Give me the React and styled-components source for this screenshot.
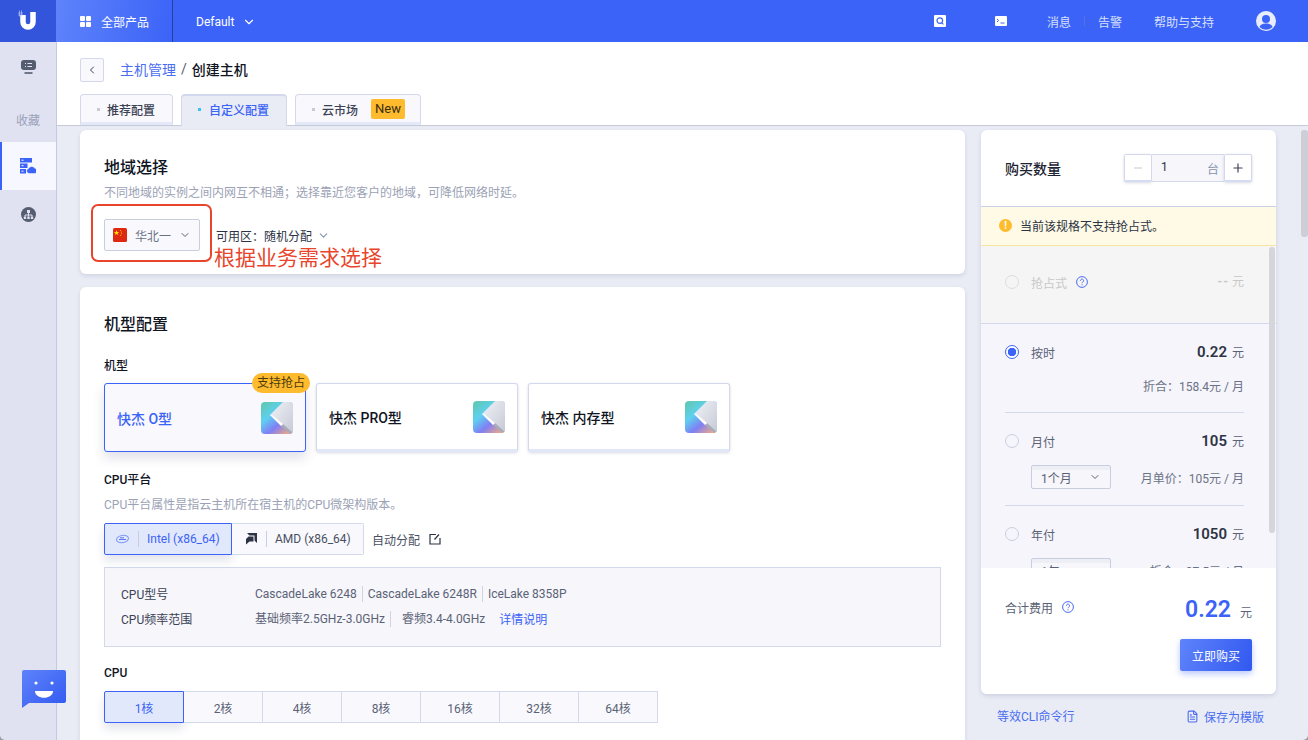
import React from 'react';
import styled, { createGlobalStyle } from 'styled-components';
import { ChevronDown, ChevronLeft, Minus, Plus, FileText } from 'lucide-react';

const GlobalStyle = createGlobalStyle`
	html, body {
		margin: 0;
		height: 100%;
		overflow: hidden;
		background: #9a9a9a;
		font-family: Roboto, "Noto Sans CJK SC", sans-serif;
		font-size: 12px;
		color: #1c2233;
	}
	* {
		box-sizing: border-box;
	}
`;

const Page = styled.div`
	height: 100vh;
	display: flex;
	flex-direction: column;
	position: relative;
	overflow: hidden;
	border-radius: 0 0 5px 5px;
`;

const TopBar = styled.header`
	height: 42px;
	flex: none;
	display: flex;
	align-items: center;
	background: #3b63f7;
	color: #fff;
`;
const LogoCell = styled.div`
	width: 56px;
	height: 100%;
	display: flex;
	align-items: center;
	justify-content: center;
	background: #3355dc;
`;
const AllProducts = styled.div`
	width: 117px;
	height: 100%;
	display: flex;
	align-items: center;
	gap: 10px;
	padding-left: 24px;
	font-size: 12px;
	background: linear-gradient(100deg, #5f83fb 0%, #3b63f7 100%);
	border-right: 1px solid #26409f;
`;
const GridDots = styled.span`
	width: 11px;
	height: 11px;
	display: grid;
	grid-template-columns: 1fr 1fr;
	gap: 1px;
	i {
		background: #fff;
		border-radius: 1px;
	}
`;
const ProjectPicker = styled.div`
	display: flex;
	align-items: center;
	gap: 8px;
	margin-left: 23px;
	padding-top: 1px;
	font-size: 12px;
`;
const TopRight = styled.div`
	margin-left: auto;
	display: flex;
	align-items: center;
	padding-right: 32px;
	color: #d9e1fd;
	font-size: 12px;
`;
const TopIcon = styled.span`
	display: flex;
	width: 12px;
	height: 12px;
	margin-right: ${(p) => p.$gap}px;
`;
const TopDivider = styled.span`
	width: 1px;
	height: 10px;
	background: #5573e0;
	margin: 0 13px;
`;
const TopLink = styled.span`
	margin-right: ${(p) => p.$gap || 0}px;
`;

const Body = styled.div`
	flex: 1;
	min-height: 0;
	display: flex;
`;
const Sidebar = styled.nav`
	width: 57px;
	flex: none;
	display: flex;
	flex-direction: column;
	background: #e0e2f2;
	border-right: 1px solid #c3c9de;
`;
const SideItem = styled.div`
	height: ${(p) => p.$height}px;
	display: flex;
	align-items: center;
	justify-content: center;
	color: #9aa1b8;
	font-size: 12px;
	background: ${(p) => (p.$active ? '#f7f8ff' : 'transparent')};
	border-left: 2px solid ${(p) => (p.$active ? '#3b63f7' : 'transparent')};
	padding: ${(p) => p.$down || 0}px 2px 0 0;
`;

const Main = styled.main`
	flex: 1;
	min-width: 0;
	display: flex;
	flex-direction: column;
`;
const PageHead = styled.div`
	height: 84px;
	flex: none;
	background: #fff;
	border-bottom: 1px solid #c6cad8;
	padding: 16px 0 0 23px;
	display: flex;
	flex-direction: column;
`;
const Crumbs = styled.div`
	display: flex;
	align-items: center;
	height: 24px;
	font-size: 14px;
`;
const BackButton = styled.button`
	width: 24px;
	height: 24px;
	padding: 0;
	display: flex;
	align-items: center;
	justify-content: center;
	margin-right: 16px;
	background: #f9f9fd;
	border: 1px solid #d4d8ec;
	border-radius: 2px;
	color: #3c4256;
`;
const CrumbLink = styled.span`
	color: #4a6cf0;
	padding-bottom: 2px;
`;
const CrumbSep = styled.span`
	margin: 0 5px;
	padding-bottom: 2px;
	color: #555c70;
`;
const CrumbNow = styled.span`
	font-weight: 500;
	padding-bottom: 2px;
	color: #11151f;
`;
const Tabs = styled.div`
	display: flex;
	gap: 8px;
	margin-top: 12px;
	height: 31px;
`;
const Tab = styled.div`
	height: ${(p) => (p.$active ? 32 : 31)}px;
	width: ${(p) => p.$width}px;
	display: flex;
	align-items: center;
	padding: ${(p) => (p.$active ? '0 0 3px 16px' : '1px 0 0 16px')};
	font-weight: 500;
	font-size: 12px;
	color: ${(p) => (p.$active ? '#3b63f7' : '#3c4256')};
	background: ${(p) => (p.$active ? '#e9ecf5' : '#f9f9fd')};
	border: 1px solid #d4d8ec;
	border-top-width: ${(p) => (p.$active ? 2 : 1)}px;
	border-bottom: ${(p) => (p.$active ? 'none' : '3px solid #e4e9fa')};
	border-radius: 4px 4px 0 0;
`;
const TabDot = styled.i`
	width: 3px;
	height: 3px;
	margin-right: ${(p) => (p.$active ? 8 : 7)}px;
	background: ${(p) => (p.$active ? '#35c5ee' : '#c8cad4')};
`;
const NewTag = styled.span`
	margin-left: 13px;
	padding: 0 4px;
	height: 20px;
	line-height: 20px;
	background: #fdbb2d;
	border-radius: 2px;
	color: #3a2e10;
	font-weight: 400;
	font-size: 13px;
`;

const Content = styled.div`
	flex: 1;
	min-height: 0;
	overflow: hidden;
	display: flex;
	align-items: flex-start;
	gap: 16px;
	padding: 4px 0 0 23px;
	background: #e9ecf5;
`;
const LeftCol = styled.div`
	width: 885px;
	flex: none;
	display: flex;
	flex-direction: column;
	gap: 13px;
`;
const Card = styled.section`
	background: #fff;
	border-radius: 6px;
	box-shadow: 0 2px 4px rgba(60, 70, 110, 0.14);
	padding: 0 24px;
	height: ${(p) => p.$height}px;
	flex: none;
`;
const CardTitle = styled.h2`
	margin: 0;
	font-size: 16px;
	line-height: 24px;
	font-weight: 500;
	color: #11151f;
	padding-top: ${(p) => p.$top}px;
`;
const Hint = styled.p`
	margin: ${(p) => p.$top || 0}px 0 0;
	font-size: 12px;
	line-height: 18px;
	color: #9ba2b5;
`;
const RegionRow = styled.div`
	display: flex;
	align-items: center;
	margin-top: 17px;
`;
const RegionSelect = styled.div`
	width: 96px;
	height: 32px;
	display: flex;
	align-items: center;
	padding: 0 9px 0 8px;
	gap: 8px;
	background: #f9f9fd;
	border: 1px solid #c7cede;
	border-radius: 2px;
	color: #6b7286;
	white-space: nowrap;
	svg {
		flex: none;
	}
`;
const ChevronSlot = styled.span`
	display: flex;
	margin-left: auto;
	color: #5b6276;
`;
const ZonePicker = styled.div`
	display: flex;
	align-items: center;
	margin-left: 16px;
	color: #2d3344;
	gap: 5px;
`;
const ZoneChevron = styled.span`
	display: flex;
	color: #8a93ad;
`;
const Annotation = styled.div`
	position: absolute;
	left: 91px;
	top: 204px;
	width: 121px;
	height: 58px;
	border: 2px solid #e8452c;
	border-radius: 7px;
`;
const AnnotationText = styled.div`
	position: absolute;
	left: 214px;
	top: 243px;
	font-size: 21px;
	line-height: 30px;
	color: #e8452c;
`;

const FieldLabel = styled.div`
	font-weight: 500;
	font-size: 12px;
	line-height: 18px;
	color: #11151f;
	margin-top: ${(p) => p.$top}px;
`;
const TypeRow = styled.div`
	display: flex;
	gap: 10px;
	margin-top: 8px;
`;
const TypeCard = styled.div`
	position: relative;
	width: 202px;
	height: 69px;
	display: flex;
	align-items: center;
	justify-content: space-between;
	padding: 0 12px;
	font-size: 14px;
	font-weight: 500;
	border-radius: 3px;
	color: ${(p) => (p.$active ? '#3b63f7' : '#11151f')};
	background: ${(p) => (p.$active ? '#f8f8fd' : '#fff')};
	border: 1px solid ${(p) => (p.$active ? '#3b63f7' : '#d4d8ec')};
	border-bottom: ${(p) => (p.$active ? '1px solid #3b63f7' : '3px solid #e1e6f8')};
	box-shadow: ${(p) => (p.$active ? '0 6px 12px rgba(60, 70, 110, 0.16)' : '0 1px 3px rgba(60, 70, 110, 0.2)')};
`;
const SpotBadge = styled.span`
	position: absolute;
	top: -11px;
	right: -5px;
	height: 20px;
	padding: 0 5px;
	line-height: 20px;
	background: #fdbb2d;
	border-radius: 10px;
	font-size: 12px;
	font-weight: 400;
	color: #4c3a0d;
`;
const PlatformRow = styled.div`
	display: flex;
	align-items: center;
	margin-top: 9px;
`;
const PlatformButton = styled.div`
	width: ${(p) => p.$width}px;
	height: 32px;
	display: flex;
	align-items: center;
	padding-left: ${(p) => (p.$active ? 11 : 13)}px;
	color: ${(p) => (p.$active ? '#3b63f7' : '#4a5063')};
	background: ${(p) => (p.$active ? '#e2e8fc' : '#f9f9fd')};
	border: 1px solid ${(p) => (p.$active ? '#3b63f7' : '#d4d8ec')};
	border-left-width: ${(p) => (p.$active ? 1 : 0)}px;
	border-radius: ${(p) => (p.$active ? '2px 0 0 2px' : '0 2px 2px 0')};
	box-shadow: ${(p) => (p.$active ? '0 6px 10px rgba(60, 70, 110, 0.14)' : 'none')};
`;
const PlatformSep = styled.i`
	width: 1px;
	height: 16px;
	margin: 0 8px 0 9px;
	background: #c9cede;
`;
const AutoAssign = styled.div`
	display: flex;
	align-items: center;
	gap: 9px;
	margin-left: 8px;
	color: #4a5063;
`;
const InfoBox = styled.div`
	margin-top: 12px;
	height: 80px;
	padding: 13px 16px;
	display: grid;
	grid-template-columns: 134px 1fr;
	grid-auto-rows: 25px;
	align-items: center;
	background: #f6f6fb;
	border: 1px solid #d4d8ec;
`;
const InfoLabel = styled.span`
	color: #3c4256;
`;
const InfoValues = styled.div`
	display: flex;
	align-items: center;
	color: #5b6276;
`;
const InfoValue = styled.span`
	padding-right: ${(p) => p.$after ?? 5}px;
	margin-right: ${(p) => p.$gap ?? 5}px;
	border-right: ${(p) => (p.$plain ? 'none' : '1px solid #d0d4e2')};
	line-height: 16px;
`;
const InfoLink = styled.a`
	color: #3b63f7;
`;
const CoreRow = styled.div`
	display: flex;
	margin-top: 9px;
`;
const CoreButton = styled.div`
	width: ${(p) => (p.$active ? 80 : 79)}px;
	height: 32px;
	display: flex;
	align-items: center;
	justify-content: center;
	color: ${(p) => (p.$active ? '#3b63f7' : '#5b6276')};
	background: ${(p) => (p.$active ? '#e2e8fc' : '#f9f9fd')};
	border: 1px solid ${(p) => (p.$active ? '#3b63f7' : '#d4d8ec')};
	border-left-width: ${(p) => (p.$active ? 1 : 0)}px;
	border-radius: ${(p) => (p.$active ? '2px 0 0 2px' : '0')};
	box-shadow: ${(p) => (p.$active ? '0 6px 10px rgba(60, 70, 110, 0.14)' : 'none')};
`;

const RightCol = styled.aside`
	width: 295px;
	flex: none;
	display: flex;
	flex-direction: column;
`;
const BuyPanel = styled.div`
	height: 564px;
	display: flex;
	flex-direction: column;
	background: #fff;
	border-radius: 6px;
	box-shadow: 0 2px 4px rgba(60, 70, 110, 0.16);
	overflow: hidden;
`;
const QtyHead = styled.div`
	height: 76px;
	flex: none;
	display: flex;
	align-items: center;
	justify-content: space-between;
	padding: 0 24px;
	font-size: 14px;
	font-weight: 500;
	color: #1c2233;
`;
const Stepper = styled.div`
	display: flex;
	height: 28px;
`;
const StepButton = styled.button`
	width: 28px;
	height: 28px;
	padding: 0;
	display: flex;
	align-items: center;
	justify-content: center;
	background: #fff;
	color: ${(p) => (p.$disabled ? '#c5c9d4' : '#3c4256')};
	border: 1px solid #d4d8ec;
	border-bottom: 2px solid #d4dbf3;
	border-radius: 2px;
	box-shadow: 0 1px 3px rgba(60, 70, 110, 0.2);
`;
const QtyInput = styled.div`
	width: 72px;
	display: flex;
	align-items: center;
	justify-content: space-between;
	padding: 0 5px 0 9px;
	background: #f6f6fb;
	border-top: 1px solid #d4d8ec;
	border-bottom: 1px solid #d4d8ec;
	font-size: 12px;
	font-weight: 400;
	color: #2d3344;
`;
const QtyNumber = styled.span`
	margin-top: -2px;
`;
const QtyUnit = styled.span`
	color: #8a93ad;
	margin-top: 1px;
`;
const Notice = styled.div`
	height: 40px;
	flex: none;
	display: flex;
	align-items: center;
	gap: 8px;
	padding: 0 18px 2px;
	font-size: 12px;
	color: #2d3344;
	background: #fefae6;
	border-top: 1px solid #c9d1e5;
	border-bottom: 1px solid #f9e4a0;
`;
const NoticeIcon = styled.span`
	width: 13px;
	height: 13px;
	border-radius: 50%;
	background: #fdbb2d;
	color: #fff;
	font-size: 10px;
	font-weight: 700;
	line-height: 13px;
	text-align: center;
`;
const PlanScroll = styled.div`
	position: relative;
	height: 322px;
	flex: none;
	overflow: hidden;
	background: #f5f5fb;
`;
const ScrollThumb = styled.div`
	position: absolute;
	top: ${(p) => p.$top}px;
	right: ${(p) => p.$right}px;
	width: ${(p) => p.$width}px;
	height: ${(p) => p.$height}px;
	background: #d5d6dc;
	border-radius: 3px;
`;
const SpotPlan = styled.div`
	height: 78px;
	padding: 26px 32px 0 24px;
	display: flex;
	align-items: flex-start;
	justify-content: space-between;
	background: #f5f5f5;
	border-bottom: 1px solid #d4d8ec;
	color: #c8c8c8;
`;
const SpotName = styled.span`
	color: #c8c8c8;
`;
const Plan = styled.div`
	margin: 0 32px 0 24px;
	padding: 18px 0 ${(p) => (p.$compact ? 15 : 16)}px;
	border-bottom: ${(p) => (p.$last ? 'none' : '1px solid #d4d8ec')};
`;
const PlanRow = styled.div`
	display: flex;
	align-items: center;
	height: 20px;
	color: #5b6276;
`;
const Radio = styled.span`
	width: 14px;
	height: 14px;
	margin-right: 12px;
	border-radius: 50%;
	flex: none;
	background: ${(p) => (p.$checked ? 'radial-gradient(circle, #3b63f7 0 4px, #fff 4.5px)' : 'transparent')};
	border: 1px solid ${(p) => (p.$checked ? '#3b63f7' : p.$disabled ? '#dedede' : '#c9cede')};
`;
const Help = styled.span`
	display: flex;
	margin-left: ${(p) => p.$left}px;
`;
const Price = styled.span`
	margin-left: auto;
	font-size: 12px;
	color: ${(p) => (p.$muted ? '#c8c8c8' : '#5b6276')};
	b {
		font-size: 15px;
		font-weight: 600;
		color: #2d3344;
		margin-right: 5px;
	}
`;
const MutedPrice = styled.span`
	font-size: 14px;
	font-weight: 500;
	font-variant-ligatures: none;
	letter-spacing: 1px;
	margin-right: 3px;
`;
const PlanSub = styled.div`
	display: flex;
	align-items: center;
	justify-content: space-between;
	height: 24px;
	margin-top: ${(p) => (p.$compact ? 11 : 14)}px;
	padding-left: 26px;
	color: #6b7286;
	font-size: 12px;
`;
const PlanSelect = styled.div`
	width: 80px;
	height: 24px;
	display: flex;
	align-items: center;
	padding: 0 9px;
	background: linear-gradient(#eeeff6 0 4px, #f6f6fb 4px);
	border: 1px solid #c7cede;
	border-radius: 2px;
	color: #5b6276;
`;
const SubText = styled.span`
	margin-left: auto;
`;
const TotalBox = styled.div`
	flex: 1;
	background: #fff;
	padding: 27px 24px 0;
	display: flex;
	flex-direction: column;
`;
const TotalRow = styled.div`
	display: flex;
	align-items: center;
	height: 24px;
	color: #5b6276;
	font-size: 12px;
`;
const TotalPrice = styled.span`
	margin-left: auto;
	margin-top: 4px;
	b {
		font-size: 23px;
		font-weight: 600;
		color: #3b63f7;
		margin-right: 9px;
	}
	em {
		font-style: normal;
		color: #5b6276;
	}
`;
const BuyButton = styled.button`
	align-self: flex-end;
	width: 72px;
	height: 32px;
	margin-top: 20px;
	border: none;
	border-radius: 2px;
	font: inherit;
	font-size: 12px;
	color: #fff;
	background: linear-gradient(110deg, #5f83fb, #3159f0);
	box-shadow: 0 3px 6px rgba(59, 99, 247, 0.35);
`;
const PanelLinks = styled.div`
	display: flex;
	align-items: center;
	justify-content: space-between;
	margin-top: 11px;
	padding: 0 12px 0 16px;
	color: #4a6cf0;
	font-size: 12px;
`;
const SaveLink = styled.span`
	display: flex;
	align-items: center;
	gap: 5px;
	margin-top: 3px;
`;
const PageScroll = styled.div`
	position: absolute;
	top: 130px;
	right: 0;
	width: 7px;
	height: 107px;
	background: #cdced6;
	border-radius: 3px;
`;
const ChatBubble = styled.div`
	position: absolute;
	left: 22px;
	top: 670px;
	display: flex;
`;

const ULogo = () => (
	<svg width="22" height="22" viewBox="0 0 22 22">
		<path d="M6 5v7a5 5 0 0 0 10 0V2" fill="none" stroke="#fff" strokeWidth="5.5" />
		<path d="M1 3h5M1 5h5M2.500 .5v6M4.500 .5v6" stroke="#c4d0fb" strokeWidth="0.6" fill="none" />
	</svg>
);
const SearchIcon = () => (
	<svg width="12" height="12" viewBox="0 0 12 12">
		<rect width="12" height="12" rx="1" fill="#fff" />
		<circle cx="5.8" cy="5.6" r="2.8" fill="none" stroke="#3b63f7" strokeWidth="1.2" />
		<path d="M7.8 7.8l1.6 1.6" stroke="#3b63f7" strokeWidth="1.2" />
	</svg>
);
const TerminalIcon = () => (
	<svg width="12" height="12" viewBox="0 0 12 12">
		<rect y="1" width="12" height="10" rx="1" fill="#fff" />
		<path d="M2 4l1.6 1.5L2 7" fill="none" stroke="#3b63f7" strokeWidth="1" />
		<path d="M5.5 8h4" stroke="#3b63f7" strokeWidth="1" />
	</svg>
);
const AvatarIcon = () => (
	<svg width="20" height="20" viewBox="0 0 20 20">
		<circle cx="10" cy="10" r="10" fill="#e8ecfb" />
		<circle cx="10" cy="8" r="4" fill="#3b63f7" />
		<path d="M3.5 16c1-3 4-3.6 6.500-3.600s5.500.6 6.500 3.600a9 9 0 0 1-13 0z" fill="#3b63f7" />
	</svg>
);
const MonitorIcon = () => (
	<svg width="15" height="14" viewBox="0 0 15 14">
		<rect width="15" height="10" rx="3" fill="#555d70" />
		<path d="M3.500 13h8" stroke="#555d70" strokeWidth="1.600" />
		<path d="M4 3.500h1M4 6.500h1M6.500 3.500h4.500M6.500 6.500h4.500" stroke="#e0e2f2" strokeWidth="1.200" />
	</svg>
);
const ServerCloudIcon = () => (
	<svg width="16" height="16" viewBox="0 0 16 16">
		<path d="M0 0h12v4.400H0zM0 5.500h7.500v4.400H0zM0 11h6v4.400H0z" fill="#3b63f7" />
		<path d="M1.500 2.200h2M1.500 7.700h2M1.500 13.200h2" stroke="#fff" />
		<path d="M9 15.500a2.500 2.500 0 0 1-.5-4.900 3.400 3.400 0 0 1 6.100-.5 2.800 2.800 0 0 1 .5 5.400z" fill="#3b63f7" stroke="#f7f8ff" strokeWidth=".5" />
	</svg>
);
const NetworkIcon = () => (
	<svg width="15" height="15" viewBox="0 0 15 15">
		<circle cx="7.500" cy="7.500" r="7.500" fill="#555d70" />
		<path d="M6 3h3v3H6zM2.800 9.500h2.400V12H2.800zM6.300 9.500h2.400V12H6.300zM9.800 9.500h2.400V12H9.800z" fill="#e0e2f2" />
		<path d="M7.500 6v3.500M4 9.500V8h7v1.500" fill="none" stroke="#e0e2f2" />
	</svg>
);
const FlagIcon = () => (
	<svg width="14" height="14" viewBox="0 0 14 14">
		<rect width="14" height="14" rx="1.500" fill="#de2910" />
		<path d="M3.500 2l.7 1.900 2 .1-1.600 1.200.6 1.900-1.700-1.100-1.700 1.100.6-1.900L.8 4l2-.1z" fill="#ffde00" />
		<circle cx="7.500" cy="2.500" r=".5" fill="#ffde00" />
		<circle cx="8.500" cy="4" r=".5" fill="#ffde00" />
		<circle cx="8.500" cy="5.800" r=".5" fill="#ffde00" />
		<circle cx="7.500" cy="7.200" r=".5" fill="#ffde00" />
	</svg>
);
const KLogo = ({ id }) => (
	<svg width="32" height="32" viewBox="0 0 32 32">
		<defs>
			<linearGradient id={`${id}-a`} x1="0" y1="0" x2="0.8" y2="1">
				<stop offset="0" stopColor="#5fc7a8" />
				<stop offset="0.4" stopColor="#5fd0f0" />
				<stop offset="0.7" stopColor="#7f7ff5" />
				<stop offset="1" stopColor="#e8a58c" />
			</linearGradient>
			<linearGradient id={`${id}-b`} x1="0" y1="0" x2="1" y2="1">
				<stop offset="0" stopColor="#f1f2f6" />
				<stop offset="1" stopColor="#c5c8d6" />
			</linearGradient>
			<clipPath id={`${id}-c`}>
				<rect width="32" height="32" rx="4" />
			</clipPath>
		</defs>
		<g clipPath={`url(#${id}-c)`}>
			<rect width="32" height="32" fill={`url(#${id}-a)`} />
			<path d="M32 0H22L10 12l12 12 10 8z" fill={`url(#${id}-b)`} />
			<path d="M20 24l2-2 10 9v1h-3z" fill="#a8abb8" />
			<path d="M10 12l12 10-2 2L9 13z" fill="#fff" />
		</g>
	</svg>
);
const IntelIcon = () => (
	<svg width="13" height="12" viewBox="0 0 13 12">
		<ellipse cx="6.500" cy="6" rx="6" ry="3.600" fill="none" stroke="#7f9bf5" strokeWidth="1" transform="rotate(-10 6.500 6)" />
		<path d="M3 6.500h7M4 4.800h4" stroke="#5a78ef" strokeWidth="1" />
	</svg>
);
const AmdIcon = () => (
	<svg width="12" height="12" viewBox="0 0 12 12">
		<path d="M2 0H12v10L9.500 7.500V2.500H4.500z" fill="#2d3344" />
		<path d="M1 11.500V6l2.500-2.500H8.500V8.500H4.500L1 11.500z" fill="#2d3344" />
	</svg>
);
const OpenIcon = () => (
	<svg width="12" height="12" viewBox="0 0 12 12" fill="none" stroke="#2d3344" strokeWidth="1.200">
		<path d="M7 1.500H1v9.500h10V5" />
		<path d="M5.500 6.500L10 1.500" />
	</svg>
);
const HelpIcon = () => (
	<svg width="12" height="12" viewBox="0 0 12 12" fill="none" stroke="#4a6cf0">
		<circle cx="6" cy="6" r="5.400" />
		<path d="M4.400 4.700a1.600 1.600 0 1 1 2.400 1.400c-.5.300-.8.600-.8 1.100" />
		<path d="M6 8.300v1" />
	</svg>
);
const ChatIcon = () => (
	<svg width="44" height="38" viewBox="0 0 44 38">
		<defs>
			<linearGradient id="chatFill" x1="0" y1="0" x2="1" y2="1">
				<stop offset="0" stopColor="#5f83fb" />
				<stop offset="1" stopColor="#3159f0" />
			</linearGradient>
		</defs>
		<path d="M2 0h40a2 2 0 0 1 2 2v29a2 2 0 0 1-2 2H7l-7 5V2a2 2 0 0 1 2-2z" fill="url(#chatFill)" />
		<circle cx="14" cy="13" r="1.600" fill="#fff" />
		<circle cx="30" cy="13" r="1.600" fill="#fff" />
		<path d="M13 21h18c0 9-18 9-18 0z" fill="#fff" />
	</svg>
);

const coreOptions = ['1核', '2核', '4核', '8核', '16核', '32核', '64核'];
const typeOptions = [
	{ id: 'o', name: '快杰 O型', active: true },
	{ id: 'pro', name: '快杰 PRO型' },
	{ id: 'mem', name: '快杰 内存型' },
];

const App = () => {
	return (
		<Page>
			<GlobalStyle />
			<TopBar>
				<LogoCell>
					<ULogo />
				</LogoCell>
				<AllProducts>
					<GridDots>
						<i />
						<i />
						<i />
						<i />
					</GridDots>
					全部产品
				</AllProducts>
				<ProjectPicker>
					Default
					<ChevronDown size={14} />
				</ProjectPicker>
				<TopRight>
					<TopIcon $gap={49}>
						<SearchIcon />
					</TopIcon>
					<TopIcon $gap={40}>
						<TerminalIcon />
					</TopIcon>
					<TopLink>消息</TopLink>
					<TopDivider />
					<TopLink $gap={32}>告警</TopLink>
					<TopLink $gap={42}>帮助与支持</TopLink>
					<AvatarIcon />
				</TopRight>
			</TopBar>
			<Body>
				<Sidebar>
					<SideItem $height={50}>
						<MonitorIcon />
					</SideItem>
					<SideItem $height={50} $down={4}>
						收藏
					</SideItem>
					<SideItem $height={48} $active>
						<ServerCloudIcon />
					</SideItem>
					<SideItem $height={48}>
						<NetworkIcon />
					</SideItem>
				</Sidebar>
				<Main>
					<PageHead>
						<Crumbs>
							<BackButton>
								<ChevronLeft size={12} />
							</BackButton>
							<CrumbLink>主机管理</CrumbLink>
							<CrumbSep>/</CrumbSep>
							<CrumbNow>创建主机</CrumbNow>
						</Crumbs>
						<Tabs>
							<Tab $width={93}>
								<TabDot />
								推荐配置
							</Tab>
							<Tab $width={106} $active>
								<TabDot $active />
								自定义配置
							</Tab>
							<Tab $width={126}>
								<TabDot />
								云市场
								<NewTag>New</NewTag>
							</Tab>
						</Tabs>
					</PageHead>
					<Content>
						<LeftCol>
							<Card $height={144}>
								<CardTitle $top={26}>地域选择</CardTitle>
								<Hint $top={4}>不同地域的实例之间内网互不相通；选择靠近您客户的地域，可降低网络时延。</Hint>
								<RegionRow>
									<RegionSelect>
										<FlagIcon />
										华北一
										<ChevronSlot>
											<ChevronDown size={12} />
										</ChevronSlot>
									</RegionSelect>
									<ZonePicker>
										可用区：随机分配
										<ZoneChevron>
											<ChevronDown size={13} />
										</ZoneChevron>
									</ZonePicker>
								</RegionRow>
							</Card>
							<Card $height={460}>
								<CardTitle $top={26}>机型配置</CardTitle>
								<FieldLabel $top={20}>机型</FieldLabel>
								<TypeRow>
									{typeOptions.map((type) => (
										<TypeCard key={type.id} $active={type.active}>
											{type.name}
											<KLogo id={type.id} />
											{type.active && <SpotBadge>支持抢占</SpotBadge>}
										</TypeCard>
									))}
								</TypeRow>
								<FieldLabel $top={19}>CPU平台</FieldLabel>
								<Hint $top={7}>CPU平台属性是指云主机所在宿主机的CPU微架构版本。</Hint>
								<PlatformRow>
									<PlatformButton $width={128} $active>
										<IntelIcon />
										<PlatformSep />
										Intel (x86_64)
									</PlatformButton>
									<PlatformButton $width={132}>
										<AmdIcon />
										<PlatformSep />
										AMD (x86_64)
									</PlatformButton>
									<AutoAssign>
										自动分配
										<OpenIcon />
									</AutoAssign>
								</PlatformRow>
								<InfoBox>
									<InfoLabel>CPU型号</InfoLabel>
									<InfoValues>
										<InfoValue>CascadeLake 6248</InfoValue>
										<InfoValue>CascadeLake 6248R</InfoValue>
										<InfoValue $plain>IceLake 8358P</InfoValue>
									</InfoValues>
									<InfoLabel>CPU频率范围</InfoLabel>
									<InfoValues>
										<InfoValue $after={5} $gap={11}>基础频率2.5GHz-3.0GHz</InfoValue>
										<InfoValue $plain $after={14} $gap={0}>
											睿频3.4-4.0GHz
										</InfoValue>
										<InfoLink>详情说明</InfoLink>
									</InfoValues>
								</InfoBox>
								<FieldLabel $top={17}>CPU</FieldLabel>
								<CoreRow>
									{coreOptions.map((core, index) => (
										<CoreButton key={core} $active={index === 0}>
											{core}
										</CoreButton>
									))}
								</CoreRow>
							</Card>
						</LeftCol>
						<RightCol>
							<BuyPanel>
								<QtyHead>
									购买数量
									<Stepper>
										<StepButton $disabled>
											<Minus size={12} />
										</StepButton>
										<QtyInput>
											<QtyNumber>1</QtyNumber>
											<QtyUnit>台</QtyUnit>
										</QtyInput>
										<StepButton>
											<Plus size={14} />
										</StepButton>
									</Stepper>
								</QtyHead>
								<Notice>
									<NoticeIcon>!</NoticeIcon>
									当前该规格不支持抢占式。
								</Notice>
								<PlanScroll>
									<SpotPlan>
										<PlanRow>
											<Radio $disabled />
											<SpotName>抢占式</SpotName>
											<Help $left={9}>
												<HelpIcon />
											</Help>
										</PlanRow>
										<Price $muted>
											<MutedPrice>--</MutedPrice>元
										</Price>
									</SpotPlan>
									<Plan $compact>
										<PlanRow>
											<Radio $checked />
											按时
											<Price>
												<b>0.22</b>元
											</Price>
										</PlanRow>
										<PlanSub $compact>
											<SubText>折合：158.4元 / 月</SubText>
										</PlanSub>
									</Plan>
									<Plan>
										<PlanRow>
											<Radio />
											月付
											<Price>
												<b>105</b>元
											</Price>
										</PlanRow>
										<PlanSub>
											<PlanSelect>
												1个月
												<ChevronSlot>
													<ChevronDown size={12} />
												</ChevronSlot>
											</PlanSelect>
											<SubText>月单价：105元 / 月</SubText>
										</PlanSub>
									</Plan>
									<Plan $last>
										<PlanRow>
											<Radio />
											年付
											<Price>
												<b>1050</b>元
											</Price>
										</PlanRow>
										<PlanSub>
											<PlanSelect>
												1年
												<ChevronSlot>
													<ChevronDown size={12} />
												</ChevronSlot>
											</PlanSelect>
											<SubText>折合：87.5元 / 月</SubText>
										</PlanSub>
									</Plan>
									<ScrollThumb $top={1} $right={1} $width={6} $height={286} />
								</PlanScroll>
								<TotalBox>
									<TotalRow>
										合计费用
										<Help $left={9}>
											<HelpIcon />
										</Help>
										<TotalPrice>
											<b>0.22</b>
											<em>元</em>
										</TotalPrice>
									</TotalRow>
									<BuyButton>立即购买</BuyButton>
								</TotalBox>
							</BuyPanel>
							<PanelLinks>
								等效CLI命令行
								<SaveLink>
									<FileText size={13} />
									保存为模版
								</SaveLink>
							</PanelLinks>
						</RightCol>
					</Content>
				</Main>
			</Body>
			<Annotation />
			<AnnotationText>根据业务需求选择</AnnotationText>
			<PageScroll />
			<ChatBubble>
				<ChatIcon />
			</ChatBubble>
		</Page>
	);
};

export default App;
